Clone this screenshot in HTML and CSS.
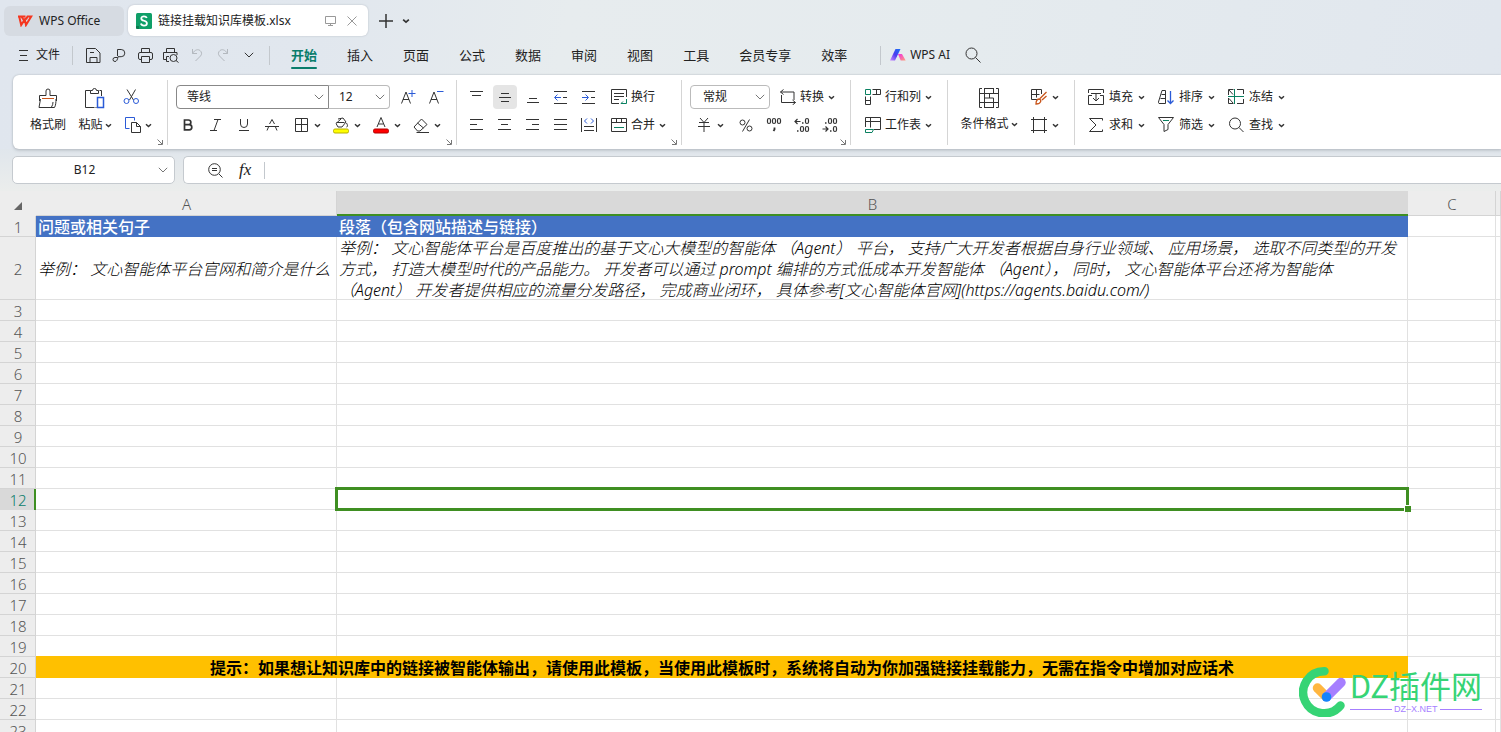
FILE: index.html
```
<!DOCTYPE html>
<html lang="zh-CN">
<head>
<meta charset="utf-8">
<title>链接挂载知识库模板.xlsx - WPS Office</title>
<link rel="stylesheet" href="styles.css">
</head>
<body>
<svg class="defs" aria-hidden="true">
  <symbol id="caret" viewBox="0 0 7 5"><path d="M1 1.2 3.5 3.5 6 1.2" stroke-width="1.5"/></symbol>
  <symbol id="chevron" viewBox="0 0 10 6"><path d="M.8.8 5 5 9.2.8"/></symbol>
  <symbol id="corner" viewBox="0 0 6 6"><path d="M.5.5 5 5M5.5 1v4.5H1"/></symbol>
</svg>

<header class="tabs">
  <button class="home-tab">
    <svg width="16" height="12" viewBox="0 0 16 12"><path class="wps" d="M1 1.5h7.5M2.2 1.5l2 8.500 3.600-5.500 1.200 5.500 5.200-8.500h-3.700L9 4.500M4.500 1.500l2.200 3.500"/></svg>
    <span>WPS Office</span>
  </button>
  <div class="file-tab">
    <svg class="sheet-logo" width="16" height="16" viewBox="0 0 16 16"><rect width="16" height="16" rx="1.500"/><path d="M10.800 5C10.300 3.800 9.300 3.300 8 3.300c-1.600 0-2.700.8-2.700 2.100 0 3.100 5.600 1.600 5.600 4.800 0 1.500-1.200 2.400-2.900 2.400-1.600 0-2.700-.7-3.100-2"/><path class="fold" d="M0 13h3v3H1.500A1.500 1.500 0 0 1 0 14.500z"/></svg>
    <span class="file-name">链接挂载知识库模板.xlsx</span>
    <svg class="soft" width="11" height="10" viewBox="0 0 11 10"><path d="M.5.5h10v7H.5zM3 9.500h5M5.500 8v1"/></svg>
    <button class="close" aria-label="关闭"><svg class="soft" width="10" height="10" viewBox="0 0 10 10"><path d="M.5.5l9 9M9.500.5l-9 9"/></svg></button>
  </div>
  <button class="add" aria-label="新建"><svg width="14" height="14" viewBox="0 0 14 14"><path d="M7 0v14M0 7h14" stroke-width="1.500"/></svg></button>
  <button class="more" aria-label="更多标签"><svg width="8" height="6"><use href="#caret"/></svg></button>
</header>

<nav class="menu">
  <button class="file"><svg width="9" height="11" viewBox="0 0 9 11"><path d="M0 .5h9M1 5.500h7M0 10.500h9"/></svg><span>文件</span></button>
  <i class="rule"></i>
  <div class="quick">
    <button aria-label="保存"><svg width="15" height="15" viewBox="0 0 15 15"><path d="M.5.5h9l4.500 4.500v9.500H.5zM4 14.500v-5h7v5M4 4.500h4"/></svg></button>
    <button aria-label="输出"><svg width="15" height="15" viewBox="0 0 15 15"><path d="M5.500 8V1.500h3.700a3.600 3.600 0 0 1 0 7.200H6C5.500 12 4.500 13.500 3 13.500a2 2 0 0 1 0-4h2.500"/></svg></button>
    <button aria-label="打印"><svg width="15" height="15" viewBox="0 0 15 15"><path d="M3.500 4V.5h8V4M3.500 11.500H2a1.500 1.500 0 0 1-1.500-1.500V6A1.500 1.500 0 0 1 2 4.500h11A1.500 1.500 0 0 1 14.500 6v4a1.500 1.500 0 0 1-1.500 1.500h-1.500M3.500 8.500h8v6h-8z"/></svg></button>
    <button aria-label="打印预览"><svg width="16" height="15" viewBox="0 0 16 15"><path d="M3.500 4V.5h8V4M3.500 11.500h-3v-7h13.500V7M6 13.500H3.500v-5H6"/><circle cx="10.500" cy="10" r="3.500"/><path d="M13 12.500l2.500 2"/></svg></button>
    <button class="off" aria-label="撤销"><svg width="12" height="14" viewBox="0 0 12 14"><path d="M1.500 1v4.500H6M1.500 5.500C4 1.500 7 1 9 2.500s2 4 .5 5.500L4.500 13"/></svg></button>
    <button class="off" aria-label="恢复"><svg width="12" height="14" viewBox="0 0 12 14"><path d="M10.500 1v4.500H6M10.500 5.500C8 1.500 5 1 3 2.500s-2 4-.5 5.500L7.500 13"/></svg></button>
    <button aria-label="自定义"><svg width="10" height="6"><use href="#chevron"/></svg></button>
  </div>
  <i class="rule"></i>
  <div class="sections">
    <button class="on">开始</button><button>插入</button><button>页面</button><button>公式</button><button>数据</button><button>审阅</button><button>视图</button><button>工具</button><button>会员专享</button><button>效率</button>
  </div>
  <i class="rule"></i>
  <button class="ai">
    <svg width="16" height="12" viewBox="0 0 16 12"><defs><linearGradient id="g1" x1="1" y1="0" x2="0" y2="1"><stop offset="0" stop-color="#1675f5"/><stop offset=".5" stop-color="#4b3df0"/><stop offset="1" stop-color="#d18cff"/></linearGradient><linearGradient id="g2" x1="0" y1="0" x2="1" y2="1"><stop offset="0" stop-color="#f12ee2"/><stop offset="1" stop-color="#ffa07a"/></linearGradient></defs><path class="plain" fill="url(#g1)" d="M5.500 0h5L5 11.500H0z"/><path class="plain" fill="url(#g2)" d="M8 5h4l3.700 6.500h-5z"/></svg>
    <span>WPS AI</span>
  </button>
  <button class="search" aria-label="搜索"><svg width="16" height="16" viewBox="0 0 16 16"><circle cx="6.500" cy="6.500" r="5.500"/><path d="M10.500 10.500l5 5"/></svg></button>
</nav>

<section class="ribbon">
  <div class="group clip">
    <button class="tall w48"><svg width="20" height="21" viewBox="0 0 20 21"><path d="M1.500 13V7.500h6.500V3a2 2 0 0 1 4 0v4.500h6.500V13M2.500 11L1 19.500h15.500c1.200-2 1.500-5 1.500-8.500M13.500 19c1-1.500 1.500-3 1.500-5"/><path class="orange" d="M4 10.500h12"/></svg><span>格式刷</span></button>
    <button class="tall paste"><svg width="20" height="21" viewBox="0 0 20 21"><path d="M5.500 2.500h-5v17h9M14.500 2.500h2V8M5.500 5.500h8v-3h-2a2 2 0 0 0-4 0h-2z"/><path class="blue" stroke-width="1.500" d="M12.500 9.500h6v10h-6z"/><path d="M10.500 19.500h1"/></svg><span>粘贴<svg width="7" height="5"><use href="#caret"/></svg></span></button>
    <div class="stack">
      <div class="row"><button class="b"><svg width="17" height="16" viewBox="0 0 17 16"><path d="M4 .5l6.500 10.500M12.500.5L6.500 11"/><circle class="blue" cx="3.500" cy="12" r="2.500"/><circle class="blue" cx="13" cy="12" r="2.500"/></svg></button></div>
      <div class="row"><button class="d"><svg width="16" height="16" viewBox="0 0 16 16"><path class="blue" d="M4.500 11.500H.5V.5h9v3"/><path d="M6.500 5.500h5l4 4v6h-9zM11.500 5.500v4h4"/></svg><svg width="7" height="5"><use href="#caret"/></svg></button></div>
    </div>
    <svg class="launch" width="6" height="6"><use href="#corner"/></svg>
  </div>

  <div class="group font">
    <div class="stack">
      <div class="row">
        <label class="pick family"><select aria-label="字体"><option>等线</option></select><svg width="10" height="6"><use href="#chevron"/></svg></label>
        <label class="pick size"><select aria-label="字号"><option>12</option></select><svg width="10" height="6"><use href="#chevron"/></svg></label>
        <button class="b after"><svg width="15" height="14" viewBox="0 0 15 14"><path d="M.5 13.500L5 2l4.500 11.500M2 9.500h6"/><path class="blue" d="M11 0v7M7.500 3.500h7"/></svg></button>
        <button class="b"><svg width="15" height="14" viewBox="0 0 15 14"><path d="M.5 13.500L5 2l4.500 11.500M2 9.500h6"/><path class="blue" d="M8 1.500h6.500"/></svg></button>
      </div>
      <div class="row">
        <button class="b"><svg width="10" height="12" viewBox="0 0 10 12"><path stroke-width="1.700" d="M1.500 1h4a2.300 2.300 0 0 1 0 4.700h-4zM1.500 5.700h4.700a2.500 2.500 0 0 1 0 5.200H1.500z"/></svg></button>
        <button class="b"><svg width="12" height="12" viewBox="0 0 12 12"><path d="M4 .5h7M0 11.500h7M8 .5l-4 11"/></svg></button>
        <button class="b"><svg width="12" height="12" viewBox="0 0 12 12"><path d="M2.500 0v5a3.500 3.500 0 0 0 7 0V0M1 11.500h10"/></svg></button>
        <button class="b"><svg width="14" height="12" viewBox="0 0 14 12"><path d="M4.500 5L7 .5 9.500 5M3.500 8L2 11.500M10.500 8l1.500 3.500M0 7.500h14"/></svg></button>
        <button class="d"><svg width="16" height="14" viewBox="0 0 16 14"><path d="M2.500.5h12v13h-12zM8.500.5v13M2.500 6.500h12"/></svg><svg width="7" height="5"><use href="#caret"/></svg></button>
        <button class="d"><svg width="16" height="17" viewBox="0 0 16 17"><path d="M5 2l5-1 3 4-4 5H5L3 6.500 8 2M3.500 5.500h8M13.500 6c1.300 2 1.300 4 0 4"/><rect x=".5" y="12" width="15" height="4" rx="1.500" fill="#ff0" stroke="#b8b000"/></svg><svg width="7" height="5"><use href="#caret"/></svg></button>
        <button class="d"><svg width="16" height="17" viewBox="0 0 16 17"><path d="M4 10L8 .5 12 10M5.500 7h5"/><rect x=".5" y="12" width="15" height="4" rx="1.500" fill="#f00" stroke="#b00000"/></svg><svg width="7" height="5"><use href="#caret"/></svg></button>
        <button class="d"><svg width="16" height="15" viewBox="0 0 16 15"><path d="M1 9l7.500-8L14 6.500 7 13H4.500zM4.500 5l6 5M3.500 14.500H16"/></svg><svg width="7" height="5"><use href="#caret"/></svg></button>
      </div>
    </div>
    <svg class="launch" width="6" height="6"><use href="#corner"/></svg>
  </div>

  <div class="group align">
    <div class="stack">
      <div class="row">
        <button class="b"><svg width="14" height="14" viewBox="0 0 14 14"><path d="M0 1.500h13M2 5.500h9"/></svg></button>
        <button class="b active"><svg width="14" height="10" viewBox="0 0 14 10"><path d="M3 1.500h8M1 5.500h12M3 9.500h8"/></svg></button>
        <button class="b"><svg width="14" height="14" viewBox="0 0 14 14"><path d="M3 8.500h8M1 12.500h12"/></svg></button>
        <button class="b"><svg width="14" height="14" viewBox="0 0 14 14"><path d="M0 1.500h13M9 7.500h4M0 13.500h13"/><path class="blue" d="M1 7.500h6M3.500 4.500l-3 3 3 3"/></svg></button>
        <button class="b"><svg width="14" height="14" viewBox="0 0 14 14"><path d="M0 1.500h13M9 7.500h4M0 13.500h13"/><path class="blue" d="M0 7.500h6M3.500 4.500l3 3-3 3"/></svg></button>
        <button class="t"><svg width="16" height="16" viewBox="0 0 16 16"><path d="M8 14.500H.5V.5h15V8M3 4.500h10M3 7.500h10M3 10.500h5"/><path class="green" d="M15.500 10v4.500H10M12 12.500l-2 2"/></svg><span>换行</span></button>
      </div>
      <div class="row">
        <button class="b"><svg width="14" height="12" viewBox="0 0 14 12"><path d="M0 .5h13M0 5.500h7M0 10.500h13"/></svg></button>
        <button class="b"><svg width="14" height="12" viewBox="0 0 14 12"><path d="M0 .5h13M3 5.500h7M0 10.500h13"/></svg></button>
        <button class="b"><svg width="14" height="12" viewBox="0 0 14 12"><path d="M0 .5h13M6 5.500h7M0 10.500h13"/></svg></button>
        <button class="b"><svg width="14" height="12" viewBox="0 0 14 12"><path d="M0 .5h13M0 5.500h13M0 10.500h13"/></svg></button>
        <button class="b"><svg width="16" height="14" viewBox="0 0 16 14"><path d="M.5 0v14M15.500 0v14M3 8.500h10M3 12.500h10"/><path class="blue" d="M6 .5L3.500 3 6 5.500M10 .5L12.500 3 10 5.500"/></svg></button>
        <button class="t"><svg width="16" height="14" viewBox="0 0 16 14"><path d="M.5.5h15v13H.5zM.5 4.500h15M5.500.5v4M10.500.5v4"/><path class="green" d="M3 9.500h10"/></svg><span>合并</span><svg width="7" height="5"><use href="#caret"/></svg></button>
      </div>
    </div>
    <svg class="launch" width="6" height="6"><use href="#corner"/></svg>
  </div>

  <div class="group number">
    <div class="stack">
      <div class="row">
        <label class="pick format"><select aria-label="数字格式"><option>常规</option></select><svg width="10" height="6"><use href="#chevron"/></svg></label>
        <button class="t convert"><svg width="16" height="16" viewBox="0 0 16 16"><path d="M3.500.5L.5 3l3 2.500M.5 3h13.500v8M1.500 6v7.500h14M12.500 11l3 2.500-3 2.500"/></svg><span>转换</span><svg width="7" height="5"><use href="#caret"/></svg></button>
      </div>
      <div class="row">
        <button class="d yen"><svg width="12" height="14" viewBox="0 0 12 14"><path d="M2 0l4 4.500L10 0M6 4.500V14M1 4.500h10M0 8.500h12"/></svg><svg width="7" height="5"><use href="#caret"/></svg></button>
        <button class="b"><svg width="14" height="13" viewBox="0 0 14 13"><circle cx="3.500" cy="3.500" r="2.500"/><circle cx="10.500" cy="9.500" r="2.500"/><path d="M10.500.5l-7 12"/></svg></button>
        <button class="b"><svg width="16" height="16" viewBox="0 0 16 16"><g stroke-width="1.200"><rect x="1.500" y="1.500" width="3" height="5" rx="1.500"/><rect x="6.500" y="1.500" width="3" height="5" rx="1.500"/><rect x="11.500" y="1.500" width="3" height="5" rx="1.500"/></g><path stroke-width="1.800" d="M8.500 10.500v2L7.500 14"/></svg></button>
        <button class="b"><svg width="16" height="16" viewBox="0 0 16 16"><g stroke-width="1.200"><path d="M6.500 4.500H1M3.500 2L1 4.500 3.500 7"/><rect x="11.500" y="1.500" width="3" height="5" rx="1.500"/><rect x="6.500" y="9.500" width="3" height="5" rx="1.500"/><rect x="11.500" y="9.500" width="3" height="5" rx="1.500"/></g><path stroke-width="1.500" d="M8 6h1.500M3 14h1.500"/></svg></button>
        <button class="b"><svg width="16" height="16" viewBox="0 0 16 16"><g stroke-width="1.200"><path d="M.5 12H6M3.500 9.500L6 12l-2.500 2.500"/><rect x="6.500" y="1.500" width="3" height="5" rx="1.500"/><rect x="11.500" y="1.500" width="3" height="5" rx="1.500"/><rect x="11.500" y="9.500" width="3" height="5" rx="1.500"/></g><path stroke-width="1.500" d="M3 6h1.500M8 14h1.500"/></svg></button>
      </div>
    </div>
    <svg class="launch" width="6" height="6"><use href="#corner"/></svg>
  </div>

  <div class="group sheet">
    <div class="stack">
      <div class="row"><button class="t"><svg width="16" height="16" viewBox="0 0 16 16"><path d="M7.500.5h8v5h-8M11.500.5v5M.5 7.500v8h5v-8M.5 11.500h5"/><path class="green" d="M.5.5h5v5H.5z"/></svg><span>行和列</span><svg width="7" height="5"><use href="#caret"/></svg></button></div>
      <div class="row"><button class="t"><svg width="16" height="16" viewBox="0 0 16 16"><path d="M.5 10V.5h15v12H9M.5 4.500h15M5.500.5v10"/><path class="green" d="M.5 12.500h8L7 15.500H.5z"/></svg><span>工作表</span><svg width="7" height="5"><use href="#caret"/></svg></button></div>
    </div>
  </div>

  <div class="group style">
    <button class="tall w72"><svg width="20" height="20" viewBox="0 0 20 20"><path d="M3 .5H.5v19H3M17 .5h2.500v19H17M5 .5h10M5 19.500h10M5.500.5v19M14.500.5v5M14.500 14.500v5M.5 5.500h19M.5 14.500h19M5.500 10h9v4.500M10.500 5.500V10"/></svg><span>条件格式<svg width="7" height="5"><use href="#caret"/></svg></span></button>
    <div class="stack">
      <div class="row"><button class="d"><svg width="16" height="16" viewBox="0 0 16 16"><path d="M6 10.500H.5V.5h10V5M.5 5.500h8M5.500.5v8"/><path class="orange" stroke-width="1.300" d="M15.500 3L9 9.500M15.500 7L11 11M5 15c0-3.500 1.500-5 3.500-5 2 1 2 5-3.500 5z"/></svg><svg width="7" height="5"><use href="#caret"/></svg></button></div>
      <div class="row"><button class="d"><svg width="16" height="16" viewBox="0 0 16 16"><path d="M2.500 0v16M13.500 0v16M0 2.500h16M0 13.500h16"/></svg><svg width="7" height="5"><use href="#caret"/></svg></button></div>
    </div>
  </div>

  <div class="group edit">
    <div class="stack">
      <div class="row">
        <button class="t"><svg width="16" height="16" viewBox="0 0 16 16"><path d="M.5 4V.5h15V4M3 4.500h10M4 6.500H.5v9h15v-9H12M8 5v7M5 9l3 3 3-3"/></svg><span>填充</span><svg width="7" height="5"><use href="#caret"/></svg></button>
        <button class="t"><svg width="16" height="16" viewBox="0 0 16 16"><path d="M0 14.500L4 1.500h3.500v13H1M3.500 5.500h4M2.500 9.500h5"/><path class="blue" stroke-width="1.300" d="M12.500 2v12M9.500 11.500l3 3 3-3"/></svg><span>排序</span><svg width="7" height="5"><use href="#caret"/></svg></button>
        <button class="t"><svg width="16" height="16" viewBox="0 0 16 16"><path d="M5.500.5h-5V6M1 1l4 4.500M.5 9v5.500h5M1 9.500l4 4.500M9 .5h6.500V5M9 14.500h6.500V10"/><path class="green" d="M6.500 0v15M0 7.500h16"/></svg><span>冻结</span><svg width="7" height="5"><use href="#caret"/></svg></button>
      </div>
      <div class="row">
        <button class="t"><svg width="16" height="14" viewBox="0 0 16 14"><path d="M14.500 2.500v-2H1.500L8 7l-6.500 6.500h13v-2"/></svg><span>求和</span><svg width="7" height="5"><use href="#caret"/></svg></button>
        <button class="t"><svg width="16" height="16" viewBox="0 0 16 16"><path d="M.5.5h15L10 7.500v5L6 14.500v-7z"/><path class="green" d="M5 3.500h6"/></svg><span>筛选</span><svg width="7" height="5"><use href="#caret"/></svg></button>
        <button class="t"><svg width="16" height="16" viewBox="0 0 16 16"><circle cx="7" cy="6.500" r="5.500"/><path d="M11 10.500l4.500 4.500"/></svg><span>查找</span><svg width="7" height="5"><use href="#caret"/></svg></button>
      </div>
    </div>
  </div>
</section>

<div class="formula">
  <div class="name-box"><input aria-label="名称框" value="B12"><svg width="10" height="6"><use href="#chevron"/></svg></div>
  <div class="entry">
    <button aria-label="缩放"><svg width="15" height="15" viewBox="0 0 15 15"><circle cx="6.500" cy="6.500" r="5.800"/><path d="M4 5.500h5M4 7.500h5M11 11l3.500 3.500"/></svg></button>
    <button class="fx" aria-label="插入函数">fx</button>
    <i class="rule"></i>
    <input aria-label="编辑栏">
  </div>
</div>

<main class="sheet-area">
<table class="grid">
  <colgroup><col class="c-num"><col class="c-a"><col class="c-b"><col class="c-c"><col></colgroup>
  <thead><tr><th><svg class="all" width="8" height="8" viewBox="0 0 8 8"><path d="M8 0v8H0z"/></svg></th><th>A</th><th class="picked">B</th><th>C</th><th></th></tr></thead>
  <tbody>
    <tr class="title"><th>1</th><td>问题或相关句子</td><td>段落（包含网站描述与链接）</td><td></td><td></td></tr>
    <tr class="sample"><th>2</th><td><p>举例： 文心智能体平台官网和简介是什么</p></td><td><p>举例： 文心智能体平台是百度推出的基于文心大模型的智能体 （Agent） 平台， 支持广大开发者根据自身行业领域、 应用场景， 选取不同类型的开发<br>方式， 打造大模型时代的产品能力。 开发者可以通过 prompt 编排的方式低成本开发智能体 （Agent）， 同时， 文心智能体平台还将为智能体<br>（Agent） 开发者提供相应的流量分发路径， 完成商业闭环， 具体参考[文心智能体官网](https://agents.baidu.com/)</p></td><td></td><td></td></tr>
    <tr><th>3</th><td></td><td></td><td></td><td></td></tr>
    <tr><th>4</th><td></td><td></td><td></td><td></td></tr>
    <tr><th>5</th><td></td><td></td><td></td><td></td></tr>
    <tr><th>6</th><td></td><td></td><td></td><td></td></tr>
    <tr><th>7</th><td></td><td></td><td></td><td></td></tr>
    <tr><th>8</th><td></td><td></td><td></td><td></td></tr>
    <tr><th>9</th><td></td><td></td><td></td><td></td></tr>
    <tr><th>10</th><td></td><td></td><td></td><td></td></tr>
    <tr><th>11</th><td></td><td></td><td></td><td></td></tr>
    <tr><th class="picked">12</th><td></td><td class="cursor"></td><td></td><td></td></tr>
    <tr><th>13</th><td></td><td></td><td></td><td></td></tr>
    <tr><th>14</th><td></td><td></td><td></td><td></td></tr>
    <tr><th>15</th><td></td><td></td><td></td><td></td></tr>
    <tr><th>16</th><td></td><td></td><td></td><td></td></tr>
    <tr><th>17</th><td></td><td></td><td></td><td></td></tr>
    <tr><th>18</th><td></td><td></td><td></td><td></td></tr>
    <tr><th>19</th><td></td><td></td><td></td><td></td></tr>
    <tr class="tip"><th>20</th><td colspan="2">提示：如果想让知识库中的链接被智能体输出，请使用此模板，当使用此模板时，系统将自动为你加强链接挂载能力，无需在指令中增加对应话术</td><td></td><td></td></tr>
    <tr><th>21</th><td></td><td></td><td></td><td></td></tr>
    <tr><th>22</th><td></td><td></td><td></td><td></td></tr>
    <tr><th>23</th><td></td><td></td><td></td><td></td></tr>
  </tbody>
</table>
</main>

<aside class="mark">
  <svg width="48" height="50" viewBox="0 0 48 50"><path d="M25.500 4.300A21 21 0 1 0 41.500 38.500" stroke="#36d475" stroke-width="8.500" stroke-linecap="round"/><path d="M18.500 21L27 29.500" stroke="#ffb640" stroke-width="9.500" stroke-linecap="round"/><path d="M42 15.500L28 29.500" stroke="#a67fff" stroke-width="9.500" stroke-linecap="round"/><circle cx="27.500" cy="30" r="4.800" fill="#1684fc" stroke="none"/></svg>
  <div class="mark-text"><b>DZ插件网</b><small>DZ–X.NET</small></div>
</aside>
</body>
</html>
```
FILE: styles.css
```
* { box-sizing: border-box; }

body {
  margin: 0;
  height: 100vh;
  overflow: hidden;
  display: flex;
  flex-direction: column;
  position: relative;
  background: linear-gradient(100deg, #e0e6ee 0, #e1e7ee 20%, #e7ecee 35%, #e5ebee 60%, #e0e6ee 100%);
  color: #222;
  font: 12px/16px "Noto Sans", "Noto Sans CJK SC", sans-serif;
}

button, input, select {
  margin: 0;
  padding: 0;
  border: 0;
  background: none;
  color: inherit;
  font: inherit;
}

svg {
  flex: none;
  fill: none;
  stroke: #333;
}
.defs { position: absolute; width: 0; height: 0; }
.blue { stroke: #2b5bd7; }
.green { stroke: #0a8161; }
.orange { stroke: #c9561c; }
.plain { stroke: none; }
.rule { width: 1px; background: #c3c8cd; }

/* Document tabs */
.tabs { display: flex; align-items: center; height: 41px; padding: 0 4px; flex: none; }
.home-tab {
  display: flex; align-items: center; gap: 6px;
  width: 120px; height: 30px; padding-left: 13px;
  border-radius: 6px; background: #d6dbe2;
}
.wps { stroke: #f5361f; stroke-width: 2; }
.file-tab {
  display: flex; align-items: center;
  width: 240px; height: 31px; margin-left: 4px; padding: 0 11px 0 8px;
  border-radius: 6px; background: #fff; box-shadow: 0 0 2px #b4bac2;
}
.sheet-logo { stroke: #fff; stroke-width: 1.8px; }
.sheet-logo rect { fill: #0f9f68; stroke: none; }
.sheet-logo .fold { fill: #0a7d50; stroke: none; }
.file-name { flex: 1; margin-left: 6px; white-space: nowrap; }
.soft { stroke: #999; }
.close { display: flex; margin-left: 11px; }
.add { display: flex; margin-left: 11px; }
.more { display: flex; margin-left: 9px; }

/* Menu row */
.menu { display: flex; align-items: center; height: 34px; padding: 0 19px 6px; flex: none; }
.menu .rule { height: 19px; }
.menu button { display: flex; align-items: center; justify-content: center; height: 28px; }
.menu .file { gap: 8px; margin-right: 12px; }
.quick { display: flex; margin: 0 7px; }
.quick button { width: 26px; }
.quick .off svg { stroke: #b3b8be; }
.sections { display: flex; margin: 0 18px 0 6px; font-size: 13px; }
.sections button { position: relative; padding: 0 15px; white-space: nowrap; }
.sections .on { color: #0a7d6b; font-weight: 700; }
.sections .on::after {
  content: ""; position: absolute; left: 15px; right: 15px; bottom: 0;
  height: 2px; border-radius: 1px; background: #0a7d6b;
}
.menu .ai { gap: 4px; margin-left: 9px; }
.menu .search { margin-left: 15px; }

/* Ribbon */
.ribbon {
  position: relative;
  display: flex; flex: none; height: 74px; margin-left: 13px; padding: 5px 0 4px;
  border-radius: 6px 0 0 6px; background: #fff;
  box-shadow: 0 0 2px #a9b0b7, 0 2px 3px #c5cbd1;
}
.group { position: relative; display: flex; padding: 5px 0 0; border-right: 1px solid #d5d5d5; }
.group:last-child { border-right: 0; }
.stack { display: flex; flex-direction: column; gap: 4px; }
.row { display: flex; height: 24px; }
.ribbon button { display: flex; align-items: center; white-space: nowrap; }
.ribbon .b { justify-content: center; width: 28px; }
.ribbon .b.active { width: 24px; margin: 0 2px; border-radius: 4px; background: #e5e5e5; }
.ribbon .d { gap: 5px; width: 40px; padding-left: 7px; }
.ribbon .t { gap: 4px; padding-left: 8px; }
.ribbon .tall { flex-direction: column; gap: 8px; padding-top: 3px; height: 52px; }
.tall span { display: flex; align-items: center; gap: 2px; line-height: 18px; }
.tall svg { margin-bottom: -1px; }
.w48 { width: 48px; }
.ribbon .paste { width: 46px; }
.w72 { width: 70px; }
.launch { position: absolute; right: 4px; bottom: 0; stroke: #777; }

.clip { width: 155px; padding-left: 11px; }
.clip .b { margin-left: -1px; }
.clip .d { padding-left: 7px; gap: 4px; }
.font { width: 289px; padding-left: 6px; }
.align { width: 225px; padding-left: 6px; }
.number { width: 169px; padding-left: 8px; }
.sheet { width: 97px; padding-left: 6px; }
.style { width: 127px; padding-left: 6px; }
.edit { padding-left: 5px; }
.edit .t { gap: 5px; width: 70px; }
.ribbon .yen { width: 42px; padding-left: 8px; gap: 7px; }
.ribbon .convert { padding-left: 10px; }

.pick { position: relative; display: flex; border: 1px solid #aaa; }
.pick select { width: 100%; padding-left: 10px; appearance: none; outline: 0; }
.pick svg { position: absolute; right: 4px; top: 8px; stroke: #777; }
.family { width: 153px; margin-left: 2px; border-color: #888; border-radius: 4px 0 0 4px; }
.size { width: 61px; border-left: 0; border-radius: 0 4px 4px 0; border-color: #bbb; }
.format { width: 80px; border-color: #bbb; border-radius: 4px; }
.format select { padding-left: 12px; }
.after { margin-left: 4px; }

/* Name box and formula input */
.formula { display: flex; gap: 8px; flex: none; padding: 7px 0 7px 12px; background: linear-gradient(#e0e6ec, #ebedec); }
.name-box, .entry { display: flex; align-items: center; height: 28px; border: 1px solid #c5cacf; background: #fff; }
.name-box { width: 163px; padding-right: 6px; border-radius: 5px; }
.name-box input { flex: 1; min-width: 0; padding-right: 2px; text-align: center; }
.name-box svg { stroke: #777; }
.entry { flex: 1; padding-left: 24px; border-right: 0; border-radius: 5px 0 0 5px; }
.entry button { display: flex; }
.entry .fx { margin: 0 13px 0 16px; font: italic 17px/18px "Liberation Serif", serif; }
.entry .rule { height: 17px; }
.entry input { flex: 1; }

/* Worksheet */
.sheet-area { flex: 1; min-height: 0; overflow: hidden; background: #fff; }
.grid { width: 100%; table-layout: fixed; border-spacing: 0; font: 300 16px/19px "Noto Sans", "Noto Sans CJK SC", sans-serif; }
.c-num { width: 36px; }
.c-a { width: 301px; }
.c-b { width: 1071px; }
.c-c { width: 88px; }
.grid th, .grid td { height: 21px; padding: 2px 0 0; box-shadow: inset -1px -1px #e1e1e1; }
.grid th { background: #ededed; color: #555; font-size: 15px; font-weight: 300; box-shadow: inset -1px -1px #d4d4d4; }
.grid thead th { height: 25px; }
.grid thead th:first-child { box-shadow: none; }
.grid thead .picked { background: #d9d9d9; box-shadow: inset 0 -2px #3f8f22; }
.grid tbody .picked { background: #d9d9d9; color: #0a7d6b; box-shadow: inset -2px 0 #3f8f22; }
.grid td { padding-left: 2px; color: #000; white-space: nowrap; }
.all { vertical-align: middle; }
.all path { fill: #666; stroke: none; }
.grid .title td:nth-child(2), .grid .title td:nth-child(3) { background: #4472c4; color: #fff; font-weight: 500; box-shadow: none; }
.grid .sample td { padding-top: 0; font-style: italic; line-height: 21px; }
.sample p { margin: 1px 0 -1px; }
.grid .tip td[colspan] { padding-left: 0; background: #ffc000; font-weight: 700; text-align: center; box-shadow: 0 -1px #ffc000; }
.cursor { position: relative; }
.cursor::before { content: ""; position: absolute; inset: -2px -1px -1px -2px; border: 3px solid #3f8f22; }
.cursor::after { content: ""; position: absolute; right: -3px; bottom: -2px; width: 6px; height: 6px; border: solid #fff; border-width: 1px 0 0 1px; background: #3f8f22; }

/* Corner mark */
.mark { position: absolute; right: 19px; bottom: 15px; display: flex; gap: 3px; }
.mark-text { display: flex; flex-direction: column; }
.mark b { color: #36d475; font: 400 31px/36px "Noto Sans CJK SC", sans-serif; }
.mark small { display: flex; align-items: center; gap: 2px; color: #a67fff; font: 9px/12px "Liberation Sans", sans-serif; }
.mark small::before, .mark small::after { content: ""; flex: 1; height: 1px; background: #a67fff; }
```
